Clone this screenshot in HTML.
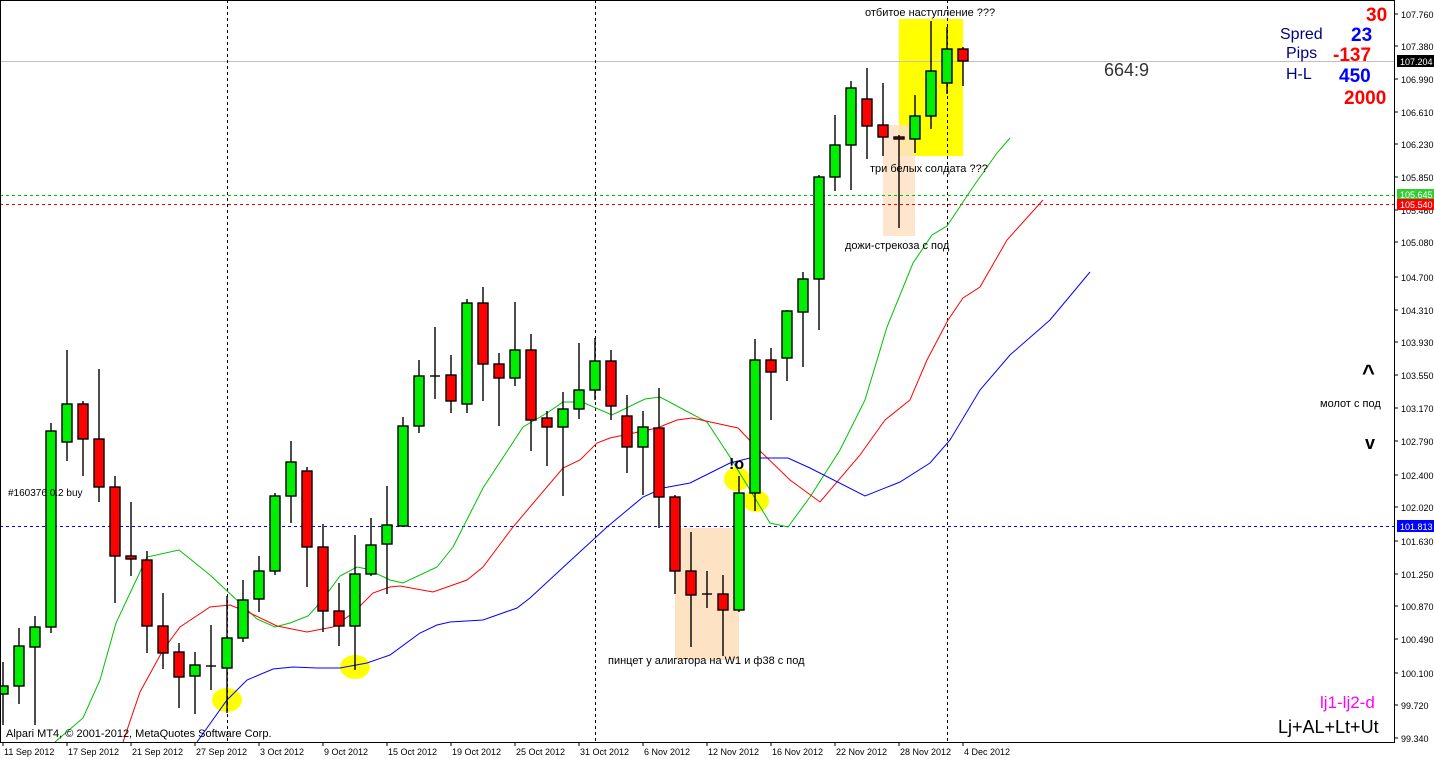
<!DOCTYPE html>
<html><head><meta charset="utf-8"><style>
html,body{margin:0;padding:0;background:#fff;width:1434px;height:759px;overflow:hidden}
svg{display:block}
text{font-family:"Liberation Sans","DejaVu Sans",sans-serif}
</style></head><body>
<svg width="1434" height="759" viewBox="0 0 1434 759" xmlns="http://www.w3.org/2000/svg">
<rect width="1434" height="759" fill="#fff"/>
<rect x="675" y="528" width="64" height="132" fill="#fde2c4"/>
<rect x="899" y="19" width="64" height="137" fill="#ffff00"/>
<rect x="883" y="125" width="32" height="111" fill="#fde2c4" opacity="0.85"/>
<ellipse cx="227" cy="700" rx="15" ry="12" fill="#ffff00"/>
<ellipse cx="355" cy="667" rx="15" ry="12" fill="#ffff00"/>
<ellipse cx="737" cy="479" rx="13" ry="12" fill="#ffff00"/>
<ellipse cx="756" cy="501" rx="13" ry="11" fill="#ffff00"/>
<line x1="0" y1="61.5" x2="1394" y2="61.5" stroke="#c0c0c0"/>
<line x1="0" y1="195.5" x2="1394" y2="195.5" stroke="#00c000" stroke-dasharray="3,3"/>
<line x1="0" y1="204.5" x2="1394" y2="204.5" stroke="#ff0000" stroke-dasharray="3,3"/>
<line x1="0" y1="526.5" x2="1394" y2="526.5" stroke="#0000ff" stroke-dasharray="3,3"/>
<g stroke="#000" stroke-dasharray="3,3">
<line x1="227.5" y1="0" x2="227.5" y2="742"/>
<line x1="595.5" y1="0" x2="595.5" y2="742"/>
<line x1="947.5" y1="0" x2="947.5" y2="742"/>
</g>
<polyline fill="none" stroke="#00c000" stroke-width="1" points="55,742 83,718 100,680 116,623 147,557 179,550 210,575 240,603 257,619 275,627 290,623 308,616 320,603 340,576 357,567 367,569 390,580 403,583 437,567 453,547 483,488 523,427 547,413 563,402 582,402 612,415 645,399 660,397 707,422 730,457 770,523 788,527 810,497 840,450 865,400 887,327 913,263 932,235 947,226 973,187 997,153 1010,138"/>
<polyline fill="none" stroke="#ff0000" stroke-width="1" points="123,742 140,692 163,650 180,627 210,607 230,605 250,613 277,626 307,632 333,627 353,613 373,593 390,587 400,586 433,592 467,580 483,567 513,527 563,468 580,460 597,443 610,438 657,428 677,420 692,418 738,428 757,448 790,480 820,502 860,455 885,420 910,400 927,360 948,320 963,298 980,287 1007,240 1043,200"/>
<polyline fill="none" stroke="#0000ff" stroke-width="1" points="197,742 227,700 247,680 273,669 293,667 317,668 340,668 367,663 390,655 420,633 437,625 450,622 483,620 517,608 530,598 570,561 607,527 643,497 663,488 690,483 730,463 750,458 788,458 810,468 865,496 900,482 930,463 950,440 980,390 1010,355 1050,320 1090,272"/>
<g stroke="#000" stroke-width="1.4">
<line x1="3" y1="662" x2="3" y2="725"/><rect x="-2" y="686" width="10" height="8" fill="#00ee00"/>
<line x1="19" y1="628" x2="19" y2="704"/><rect x="14" y="646" width="10" height="40" fill="#00ee00"/>
<line x1="35" y1="616" x2="35" y2="725"/><rect x="30" y="627" width="10" height="20" fill="#00ee00"/>
<line x1="51" y1="423" x2="51" y2="633"/><rect x="46" y="431" width="10" height="196" fill="#00ee00"/>
<line x1="67" y1="350" x2="67" y2="461"/><rect x="62" y="404" width="10" height="38" fill="#00ee00"/>
<line x1="83" y1="401" x2="83" y2="476"/><rect x="78" y="404" width="10" height="35" fill="#f00"/>
<line x1="99" y1="369" x2="99" y2="502"/><rect x="94" y="439" width="10" height="48" fill="#f00"/>
<line x1="115" y1="476" x2="115" y2="603"/><rect x="110" y="487" width="10" height="69" fill="#f00"/>
<line x1="131" y1="502" x2="131" y2="576"/><rect x="126" y="556" width="10" height="3" fill="#f00"/>
<line x1="147" y1="551" x2="147" y2="653"/><rect x="142" y="560" width="10" height="66" fill="#f00"/>
<line x1="163" y1="593" x2="163" y2="669"/><rect x="158" y="626" width="10" height="27" fill="#f00"/>
<line x1="179" y1="643" x2="179" y2="708"/><rect x="174" y="652" width="10" height="25" fill="#f00"/>
<line x1="195" y1="652" x2="195" y2="714"/><rect x="190" y="665" width="10" height="11" fill="#00ee00"/>
<line x1="211" y1="625" x2="211" y2="690"/><line x1="206" y1="666" x2="216" y2="666"/>
<line x1="227" y1="596" x2="227" y2="713"/><rect x="222" y="638" width="10" height="30" fill="#00ee00"/>
<line x1="243" y1="580" x2="243" y2="642"/><rect x="238" y="600" width="10" height="38" fill="#00ee00"/>
<line x1="259" y1="556" x2="259" y2="612"/><rect x="254" y="571" width="10" height="28" fill="#00ee00"/>
<line x1="275" y1="493" x2="275" y2="575"/><rect x="270" y="496" width="10" height="75" fill="#00ee00"/>
<line x1="291" y1="441" x2="291" y2="523"/><rect x="286" y="462" width="10" height="34" fill="#00ee00"/>
<line x1="307" y1="467" x2="307" y2="587"/><rect x="302" y="471" width="10" height="76" fill="#f00"/>
<line x1="323" y1="524" x2="323" y2="632"/><rect x="318" y="547" width="10" height="64" fill="#f00"/>
<line x1="339" y1="583" x2="339" y2="646"/><rect x="334" y="611" width="10" height="15" fill="#f00"/>
<line x1="355" y1="535" x2="355" y2="670"/><rect x="350" y="574" width="10" height="52" fill="#00ee00"/>
<line x1="371" y1="518" x2="371" y2="576"/><rect x="366" y="545" width="10" height="29" fill="#00ee00"/>
<line x1="387" y1="486" x2="387" y2="594"/><rect x="382" y="525" width="10" height="19" fill="#00ee00"/>
<line x1="403" y1="417" x2="403" y2="527"/><rect x="398" y="426" width="10" height="100" fill="#00ee00"/>
<line x1="419" y1="360" x2="419" y2="433"/><rect x="414" y="376" width="10" height="50" fill="#00ee00"/>
<line x1="435" y1="327" x2="435" y2="399"/><line x1="430" y1="376" x2="440" y2="376"/>
<line x1="451" y1="355" x2="451" y2="413"/><rect x="446" y="375" width="10" height="26" fill="#f00"/>
<line x1="467" y1="299" x2="467" y2="413"/><rect x="462" y="303" width="10" height="101" fill="#00ee00"/>
<line x1="483" y1="287" x2="483" y2="401"/><rect x="478" y="303" width="10" height="61" fill="#f00"/>
<line x1="499" y1="353" x2="499" y2="426"/><rect x="494" y="364" width="10" height="14" fill="#f00"/>
<line x1="515" y1="302" x2="515" y2="386"/><rect x="510" y="350" width="10" height="28" fill="#00ee00"/>
<line x1="531" y1="334" x2="531" y2="451"/><rect x="526" y="350" width="10" height="70" fill="#f00"/>
<line x1="547" y1="411" x2="547" y2="466"/><rect x="542" y="418" width="10" height="9" fill="#f00"/>
<line x1="563" y1="392" x2="563" y2="496"/><rect x="558" y="409" width="10" height="18" fill="#00ee00"/>
<line x1="579" y1="343" x2="579" y2="419"/><rect x="574" y="390" width="10" height="19" fill="#00ee00"/>
<line x1="595" y1="338" x2="595" y2="400"/><rect x="590" y="361" width="10" height="29" fill="#00ee00"/>
<line x1="611" y1="350" x2="611" y2="420"/><rect x="606" y="361" width="10" height="45" fill="#f00"/>
<line x1="627" y1="395" x2="627" y2="473"/><rect x="622" y="416" width="10" height="31" fill="#f00"/>
<line x1="643" y1="411" x2="643" y2="495"/><rect x="638" y="427" width="10" height="20" fill="#00ee00"/>
<line x1="659" y1="388" x2="659" y2="528"/><rect x="654" y="428" width="10" height="69" fill="#f00"/>
<line x1="675" y1="495" x2="675" y2="594"/><rect x="670" y="497" width="10" height="74" fill="#f00"/>
<line x1="691" y1="532" x2="691" y2="647"/><rect x="686" y="571" width="10" height="24" fill="#f00"/>
<line x1="707" y1="571" x2="707" y2="608"/><line x1="702" y1="594" x2="712" y2="594"/>
<line x1="723" y1="575" x2="723" y2="656"/><rect x="718" y="594" width="10" height="16" fill="#f00"/>
<line x1="739" y1="476" x2="739" y2="612"/><rect x="734" y="493" width="10" height="117" fill="#00ee00"/>
<line x1="755" y1="339" x2="755" y2="511"/><rect x="750" y="360" width="10" height="133" fill="#00ee00"/>
<line x1="771" y1="348" x2="771" y2="420"/><rect x="766" y="360" width="10" height="12" fill="#f00"/>
<line x1="787" y1="310" x2="787" y2="381"/><rect x="782" y="311" width="10" height="47" fill="#00ee00"/>
<line x1="803" y1="272" x2="803" y2="367"/><rect x="798" y="279" width="10" height="33" fill="#00ee00"/>
<line x1="819" y1="175" x2="819" y2="330"/><rect x="814" y="177" width="10" height="102" fill="#00ee00"/>
<line x1="835" y1="115" x2="835" y2="191"/><rect x="830" y="145" width="10" height="32" fill="#00ee00"/>
<line x1="851" y1="81" x2="851" y2="190"/><rect x="846" y="88" width="10" height="57" fill="#00ee00"/>
<line x1="867" y1="68" x2="867" y2="159"/><rect x="862" y="99" width="10" height="27" fill="#f00"/>
<line x1="883" y1="83" x2="883" y2="156"/><rect x="878" y="125" width="10" height="12" fill="#f00"/>
<line x1="899" y1="135" x2="899" y2="228"/><rect x="894" y="137" width="10" height="2" fill="#f00"/>
<line x1="915" y1="95" x2="915" y2="153"/><rect x="910" y="116" width="10" height="23" fill="#00ee00"/>
<line x1="931" y1="21" x2="931" y2="129"/><rect x="926" y="71" width="10" height="45" fill="#00ee00"/>
<line x1="947" y1="27" x2="947" y2="94"/><rect x="942" y="49" width="10" height="34" fill="#00ee00"/>
<line x1="963" y1="47" x2="963" y2="86"/><rect x="958" y="49" width="10" height="12" fill="#f00"/>
</g>
<rect x="0.5" y="0.5" width="1394" height="742" fill="none" stroke="#000"/>
<g font-size="11" fill="#000">
<text x="865" y="16">отбитое наступление ???</text>
<text x="870" y="172">три белых солдата ???</text>
<text x="845" y="249">дожи-стрекоза с под</text>
<text x="608" y="664">пинцет у алигатора на W1 и ф38 с под</text>
<text x="1320" y="407">молот с под</text>
</g>
<text x="8" y="496" font-size="10" fill="#000">#160376 0.2 buy</text>
<text x="6" y="737" font-size="11" fill="#000">Alpari MT4, © 2001-2012, MetaQuotes Software Corp.</text>
<text x="729" y="469" font-size="16" font-weight="bold" fill="#000">!o</text>
<text x="1104" y="76" font-size="18" fill="#333">664:9</text>
<text x="1362" y="380" font-size="22" font-weight="bold" fill="#000">^</text>
<text x="1365" y="449" font-size="18" font-weight="bold" fill="#000">v</text>
<text x="1320" y="708" font-size="17" fill="#ff00ff">lj1-lj2-d</text>
<text x="1278" y="733" font-size="18" fill="#000">Lj+AL+Lt+Ut</text>
<text x="1366" y="21" font-size="19" font-weight="bold" fill="#ff0000">30</text>
<text x="1280" y="39" font-size="16" fill="#000080">Spred</text>
<text x="1351" y="41" font-size="19" font-weight="bold" fill="#0000ff">23</text>
<text x="1286" y="58" font-size="16" fill="#000080">Pips</text>
<text x="1333" y="61" font-size="19" font-weight="bold" fill="#ff0000">-137</text>
<text x="1286" y="79" font-size="16" fill="#000080">H-L</text>
<text x="1339" y="82" font-size="19" font-weight="bold" fill="#0000ff">450</text>
<text x="1344" y="104" font-size="19" font-weight="bold" fill="#ff0000">2000</text>
<g font-size="9" fill="#000">
<g stroke="#000">
<line x1="1394" y1="14" x2="1398" y2="14"/><line x1="1394" y1="46" x2="1398" y2="46"/><line x1="1394" y1="79" x2="1398" y2="79"/><line x1="1394" y1="112" x2="1398" y2="112"/><line x1="1394" y1="144" x2="1398" y2="144"/><line x1="1394" y1="177" x2="1398" y2="177"/><line x1="1394" y1="210" x2="1398" y2="210"/><line x1="1394" y1="242" x2="1398" y2="242"/><line x1="1394" y1="277" x2="1398" y2="277"/><line x1="1394" y1="310" x2="1398" y2="310"/><line x1="1394" y1="342" x2="1398" y2="342"/><line x1="1394" y1="375" x2="1398" y2="375"/><line x1="1394" y1="408" x2="1398" y2="408"/><line x1="1394" y1="441" x2="1398" y2="441"/><line x1="1394" y1="475" x2="1398" y2="475"/><line x1="1394" y1="507" x2="1398" y2="507"/><line x1="1394" y1="541" x2="1398" y2="541"/><line x1="1394" y1="574" x2="1398" y2="574"/><line x1="1394" y1="606" x2="1398" y2="606"/><line x1="1394" y1="639" x2="1398" y2="639"/><line x1="1394" y1="673" x2="1398" y2="673"/><line x1="1394" y1="705" x2="1398" y2="705"/><line x1="1394" y1="738" x2="1398" y2="738"/>
</g>
<text x="1401" y="18">107.760</text><text x="1401" y="50">107.380</text><text x="1401" y="83">106.990</text><text x="1401" y="116">106.610</text><text x="1401" y="148">106.230</text><text x="1401" y="181">105.850</text><text x="1401" y="214">105.460</text><text x="1401" y="246">105.080</text><text x="1401" y="281">104.700</text><text x="1401" y="314">104.310</text><text x="1401" y="346">103.930</text><text x="1401" y="379">103.550</text><text x="1401" y="412">103.170</text><text x="1401" y="445">102.790</text><text x="1401" y="479">102.400</text><text x="1401" y="511">102.020</text><text x="1401" y="545">101.630</text><text x="1401" y="578">101.250</text><text x="1401" y="610">100.870</text><text x="1401" y="643">100.490</text><text x="1401" y="677">100.100</text><text x="1401" y="709">99.720</text><text x="1401" y="742">99.340</text>
<rect x="1397" y="55" width="37" height="12" fill="#000"/><text x="1400" y="65" fill="#fff">107.204</text>
<rect x="1397" y="189" width="37" height="11" fill="#33cc33"/><text x="1400" y="198" fill="#fff">105.645</text>
<rect x="1397" y="199" width="37" height="11" fill="#ff0000"/><text x="1400" y="208" fill="#fff">105.540</text>
<rect x="1397" y="520" width="37" height="12" fill="#0000ff"/><text x="1400" y="530" fill="#fff">101.813</text>
</g>
<g font-size="9" fill="#000">
<g stroke="#000">
<line x1="3" y1="742" x2="3" y2="746"/><line x1="67" y1="742" x2="67" y2="746"/><line x1="131" y1="742" x2="131" y2="746"/><line x1="195" y1="742" x2="195" y2="746"/><line x1="259" y1="742" x2="259" y2="746"/><line x1="323" y1="742" x2="323" y2="746"/><line x1="387" y1="742" x2="387" y2="746"/><line x1="451" y1="742" x2="451" y2="746"/><line x1="515" y1="742" x2="515" y2="746"/><line x1="579" y1="742" x2="579" y2="746"/><line x1="643" y1="742" x2="643" y2="746"/><line x1="707" y1="742" x2="707" y2="746"/><line x1="771" y1="742" x2="771" y2="746"/><line x1="835" y1="742" x2="835" y2="746"/><line x1="899" y1="742" x2="899" y2="746"/><line x1="963" y1="742" x2="963" y2="746"/>
</g>
<text x="4" y="755">11 Sep 2012</text><text x="68" y="755">17 Sep 2012</text><text x="132" y="755">21 Sep 2012</text><text x="196" y="755">27 Sep 2012</text><text x="260" y="755">3 Oct 2012</text><text x="324" y="755">9 Oct 2012</text><text x="388" y="755">15 Oct 2012</text><text x="452" y="755">19 Oct 2012</text><text x="516" y="755">25 Oct 2012</text><text x="580" y="755">31 Oct 2012</text><text x="644" y="755">6 Nov 2012</text><text x="708" y="755">12 Nov 2012</text><text x="772" y="755">16 Nov 2012</text><text x="836" y="755">22 Nov 2012</text><text x="900" y="755">28 Nov 2012</text><text x="964" y="755">4 Dec 2012</text>
</g>
</svg>
</body></html>
